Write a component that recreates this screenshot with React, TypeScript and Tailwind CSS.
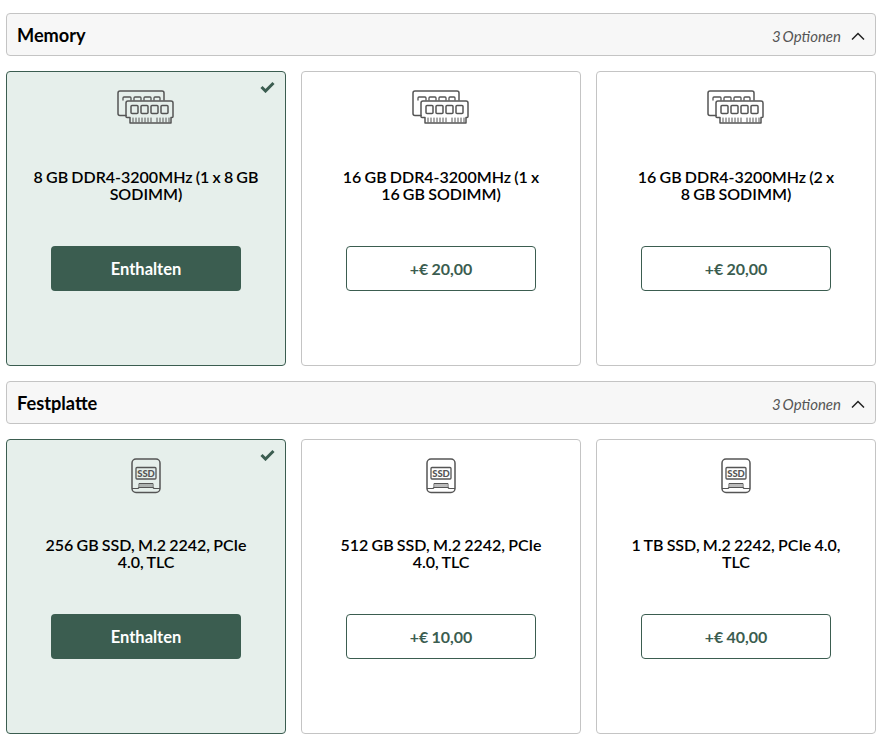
import React from "react";

function RamIcon() {
  return (
    <svg width="58" height="36" viewBox="0 0 58 36" fill="none" stroke="#555555" strokeWidth="1.5" strokeLinejoin="round" strokeLinecap="round">
      <path d="M9 25.500H3a2 2 0 0 1-2-2V3a2 2 0 0 1 2-2h42a2 2 0 0 1 2 2v7" />
      <path d="M6 10V8a1 1 0 0 1 1-1h6a1 1 0 0 1 1 1v2M17 10V8a1 1 0 0 1 1-1h5a1 1 0 0 1 1 1v2M27 10V8a1 1 0 0 1 1-1h5a1 1 0 0 1 1 1v2M37 10V8a1 1 0 0 1 1-1h4a1 1 0 0 1 1 1v2" strokeWidth="1.3" />
      <path d="M11 11h43a2 2 0 0 1 2 2v13.500a1 1 0 0 1-1 1h-1v5.500H13v-5.500h-3a1 1 0 0 1-1-1V13a2 2 0 0 1 2-2z" />
      <rect x="14" y="15.500" width="7" height="8" rx="1" />
      <rect x="24" y="15.500" width="7" height="8" rx="1" />
      <rect x="34" y="15.500" width="7" height="8" rx="1" />
      <rect x="44" y="15.500" width="7" height="8" rx="1" />
      <path d="M16 28v4M19 28v4M22 28v4M25 28v4M28 28v4M31 28v4M34 28v4M40 28v4M43 28v4M46 28v4M49 28v4M52 28v4" strokeWidth="1" />
    </svg>
  );
}

function SsdIcon() {
  return (
    <svg width="30" height="36" viewBox="0 0 30 36" fill="none" stroke="#555555" strokeWidth="1.5" strokeLinejoin="round">
      <rect x="1" y="1" width="28" height="33.500" rx="4" />
      <rect x="5" y="9.500" width="20" height="11.500" rx="1" strokeWidth="1.3" />
      <text x="15" y="18.500" textAnchor="middle" fontFamily="Lato, sans-serif" fontSize="9.500" fontWeight="900" fill="#555555" stroke="none">SSD</text>
      <path d="M1 30.500h6l1-1h14l1 1h6" strokeWidth="1.2" />
      <path d="M8 25.500h14v4H8z" strokeWidth="1" />
      <path d="M10 26v3.500M12 26v3.500M14 26v3.500M16 26v3.500M18 26v3.500M20 26v3.500" strokeWidth="0.8" />
    </svg>
  );
}

function Card({ title, price, selected, icon }: { title: string; price?: string; selected?: boolean; icon: React.ReactNode }) {
  return (
    <div className={`relative h-[295px] rounded border flex flex-col items-center ${selected ? "bg-[#e6efeb] border-[#3b5d50]" : "bg-white border-[#c4c4c4]"}`}>
      {selected && (
        <svg className="absolute right-[10px] top-[9px]" width="15" height="12" viewBox="0 0 15 12" fill="none">
          <path d="M1.500 6 5.500 10 13.500 2" stroke="#3b5d50" strokeWidth="3" />
        </svg>
      )}
      <div className="h-[36px] mt-[18px] flex items-center justify-center">{icon}</div>
      <div className="mt-[42px] h-[36px] w-[228px] text-center text-[16px] leading-[17px] font-semibold [word-spacing:-0.800px] text-black">{title}</div>
      {selected ? (
        <div className="mt-[42px] w-[190px] h-[45px] rounded bg-[#3b5d50] text-white text-[16.500px] font-bold flex items-center justify-center pt-[1px]">Enthalten</div>
      ) : (
        <div className="mt-[42px] w-[190px] h-[45px] rounded bg-white border border-[#3b5d50] text-[#3b5d50] text-[16px] font-bold flex items-center justify-center [word-spacing:-0.800px]">{price}</div>
      )}
    </div>
  );
}

function Section({ title, icon, items }: { title: string; icon: React.ReactNode; items: { title: string; price?: string; selected?: boolean }[] }) {
  return (
    <section className="flex flex-col gap-[15px]">
      <div className="h-[43px] rounded border border-[#c4c4c4] bg-[#f7f7f7] flex items-center justify-between pl-[10px] pr-[10px]">
        <h2 className="text-[18.200px] font-bold text-black pt-[2px]">{title}</h2>
        <div className="flex items-center gap-[10px] pt-[3px]">
          <span className="text-[15px] italic text-[#555555] [word-spacing:-1.500px]">3 Optionen</span>
          <svg width="14" height="8" viewBox="0 0 14 8" fill="none">
            <path d="M1 7.500 7 1.500 13 7.500" stroke="#222222" strokeWidth="1.500" />
          </svg>
        </div>
      </div>
      <div className="grid grid-cols-3 gap-[15px]">
        {items.map((it) => (
          <Card key={it.title} {...it} icon={icon} />
        ))}
      </div>
    </section>
  );
}

export default function App() {
  return (
    <div className="w-[886px] h-[744px] overflow-hidden bg-white pt-[13px] pl-[6px] pr-[10px] flex flex-col gap-[15px] font-['Lato',sans-serif]">
      <Section
        title="Memory"
        icon={<RamIcon />}
        items={[
          { title: "8\u00a0GB DDR4-3200MHz (1 x 8\u00a0GB SODIMM)", selected: true },
          { title: "16\u00a0GB DDR4-3200MHz (1 x 16\u00a0GB SODIMM)", price: "+€ 20,00" },
          { title: "16\u00a0GB DDR4-3200MHz (2 x 8\u00a0GB SODIMM)", price: "+€ 20,00" },
        ]}
      />
      <Section
        title="Festplatte"
        icon={<SsdIcon />}
        items={[
          { title: "256\u00a0GB SSD, M.2 2242, PCIe 4.0, TLC", selected: true },
          { title: "512\u00a0GB SSD, M.2 2242, PCIe 4.0, TLC", price: "+€ 10,00" },
          { title: "1\u00a0TB SSD, M.2 2242, PCIe 4.0, TLC", price: "+€ 40,00" },
        ]}
      />
    </div>
  );
}
